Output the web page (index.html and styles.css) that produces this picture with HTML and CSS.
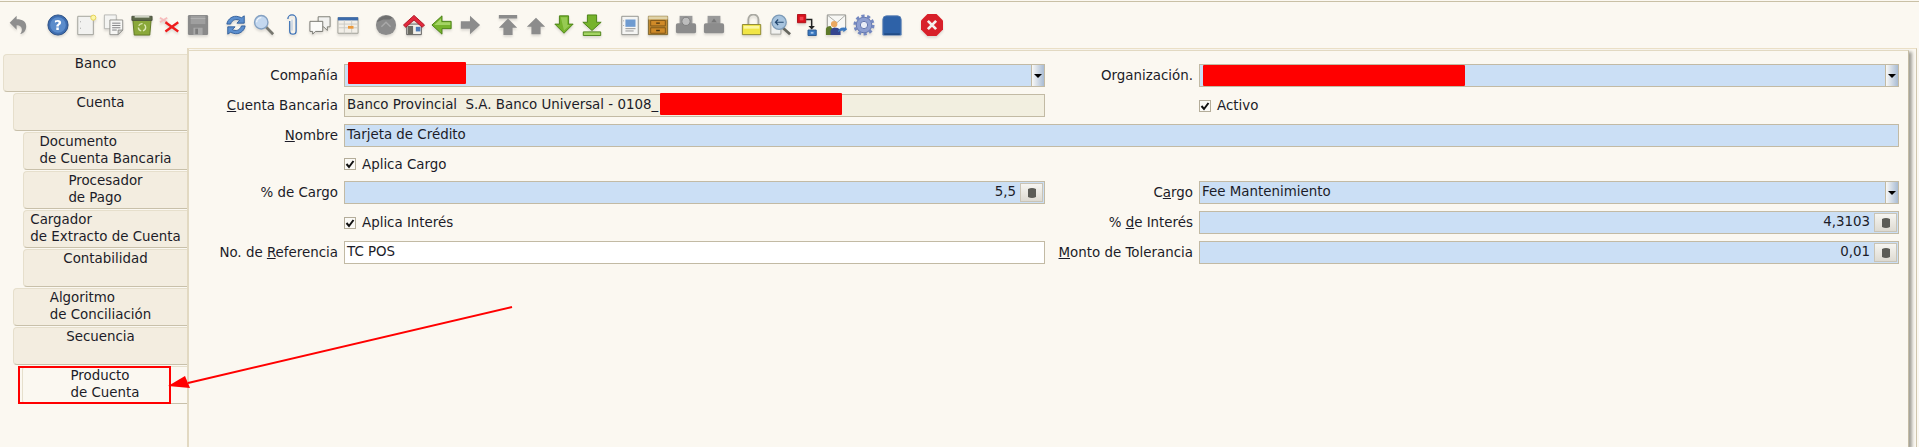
FILE: index.html
```html
<!DOCTYPE html>
<html lang="es">
<head>
  <meta charset="UTF-8" />
  <title>Banco</title>
  <link rel="stylesheet" href="styles.css">
</head>
<body>
  <!-- Barra de herramientas -->
  <div class="toolbar">
    <div class="tool-group wide">
      <span class="tool"><svg viewBox="0 0 24 24"><path d="M10 2 2 10l8 8v-5c4 0 6 2 6 5 0 2-1 4-2 5 5-1 7-5 7-9 0-5-4-8-11-8z" transform="translate(1 0) scale(.95)" fill="#8e8e8e"/></svg></span>
    </div>
    <div class="tool-group">
      <span class="tool"><svg viewBox="0 0 24 24"><circle cx="12" cy="12" r="11" fill="#3e6db0" stroke="#24497f"/><circle cx="12" cy="12" r="8.500" fill="#5b8ccb"/><text x="12" y="17.500" class="glyph">?</text></svg></span>
      <span class="tool"><svg viewBox="0 0 24 24"><path d="M3 2.500h17v20H3z" fill="#f2f2f0" stroke="#9c9c96"/><circle cx="20" cy="4" r="2.800" fill="#fbf6a8" stroke="#e3cf52"/><path d="M6 8v1M6 15v1" stroke="#999"/></svg></span>
      <span class="tool"><svg viewBox="0 0 24 24"><path d="M1.500 1h13v15h-13z" fill="#f4f4f2" stroke="#b4b4b0"/><path d="M7.500 6.500h14v11l-5 5h-9z" fill="#f6f6f4" stroke="#8e8e8a"/><path d="M10 10h9M10 12.500h9M10 15h9M10 17.500h5" stroke="#77777a"/><path d="m16.500 22.500 5-5h-5z" fill="#cfcfca" stroke="#8e8e8a"/></svg></span>
      <span class="tool"><svg viewBox="0 0 24 24"><path d="M2 6h20l-1.500 17h-17z" fill="#8aa83a" stroke="#5c7420"/><path d="M1 2.500h22V7H1z" fill="#5d6a4a" stroke="#494f3c"/><path d="M4 2h16v2H4z" fill="#cfd4c5"/><circle cx="12" cy="14.500" r="4" fill="none" stroke="#dde8b6" stroke-width="1.500" stroke-dasharray="5 2"/></svg></span>
      <span class="tool"><svg viewBox="0 0 24 24"><path d="m1 4 8 5M9 4 1 9" stroke="#f6bcbc" stroke-width="2"/><path d="m7 9 14 10M21 9 7 19" stroke="#ee1c1c" stroke-width="2.600"/></svg></span>
      <span class="tool"><svg viewBox="0 0 24 24"><path d="M1 2.500q0-1.500 1.500-1.500h19Q23 1 23 2.500v19q0 1.500-1.500 1.500h-19Q1 23 1 21.500z" fill="#8a8a8a"/><path d="M4 2h16v9H4z" fill="#9f9f9f"/><path d="M4 5h16" stroke="#b5b5b5"/><path d="M7 15h10v8H7z" fill="#a8a8a8"/><path d="M9 16h3v6H9z" fill="#7c7c7c"/></svg></span>
    </div>
    <div class="tool-group">
      <span class="tool"><svg viewBox="0 0 24 24"><path d="M2 11C3 5 9 1 15 3l3 1 3-2v8h-8l3-3c-4-2-8-1-10 4z" fill="#5c8fce" stroke="#2f5c98"/><path d="M22 13c-1 6-7 10-13 8l-3-1-3 2v-8h8l-3 3c4 2 8 1 10-4z" fill="#5c8fce" stroke="#2f5c98"/></svg></span>
      <span class="tool"><svg viewBox="0 0 24 24"><path d="m14 14 8 8" stroke="#77776f" stroke-width="3"/><circle cx="9" cy="9" r="7.300" fill="#c4d8ef" stroke="#84a1c2" stroke-width="1.500"/><path d="M4 9a5 5 0 0 1 5-5" stroke="#fff" fill="none"/></svg></span>
      <span class="tool"><svg viewBox="0 0 24 24"><path d="M9 7v11a3.500 3.500 0 0 0 7 0V5a4.500 4.500 0 0 0-9 0v0" transform="translate(.5 .5)" fill="none" stroke="#3b70b5" stroke-width="1.400"/><path d="M12 6v12" stroke="#a9c1de"/></svg></span>
      <span class="tool"><svg viewBox="0 0 24 24"><path d="M10 3h13v11h-3v4l-4-4h-6z" fill="#f2f2f0" stroke="#77776f"/><path d="M1 8h14v11H7l-3 3v-3H1z" fill="#fbfbf9" stroke="#6e6e68"/></svg></span>
      <span class="tool"><svg viewBox="0 0 24 24"><path d="M1 4h22v17H1z" fill="#f2efe8" stroke="#9c9c94"/><path d="M1 3.500h22V7H1z" fill="#3c6bab"/><path d="M1 11h22M1 15h22M8 7v14M16 7v14" stroke="#c9c9c4"/><path d="M12 13h6v3h-6z" fill="#ec9a3c"/></svg></span>
    </div>
    <div class="tool-group">
      <span class="tool"><svg viewBox="0 0 24 24"><circle cx="12" cy="12" r="11" fill="#8b8b8b"/><path d="M2 9c3-7 12-9 17-5l-3 2H9z" fill="#6f6f6f"/><path d="m7 14 5-5 5 5" fill="none" stroke="#a9a9a9" stroke-width="1.500"/></svg></span>
      <span class="tool"><svg viewBox="0 0 24 24"><path d="M4 11h16v11.500H4z" fill="#f2f0ea" stroke="#555"/><path d="M5 13h6v9.500H5z" fill="#6b6b63"/><path d="M14 14h5v5h-5z" fill="#4b7ab8"/><path d="M.5 12 12 1.500 23.500 12 21 14.500 12 6.500 3 14.500z" fill="#e2283c" stroke="#a8101f"/></svg></span>
      <span class="tool"><svg viewBox="0 0 24 24"><path d="M1 12 12 2v6h10v8H12v6z" fill="#76b32c" stroke="#467e12"/><path d="M3.500 12 11 5v4h10v3H3.500z" fill="#a4d464"/></svg></span>
      <span class="tool"><svg viewBox="0 0 24 24"><path d="M23 12 12 2v6H2v8h10v6z" fill="#8c8c8c"/></svg></span>
    </div>
    <div class="tool-group">
      <span class="tool"><svg viewBox="0 0 24 24"><path d="M2 1h20v4H2zM12 5l10 10h-5v8H7v-8H2z" fill="#8c8c8c"/></svg></span>
      <span class="tool"><svg viewBox="0 0 24 24"><path d="M12 4l10 10h-5v8H7v-8H2z" fill="#8c8c8c"/></svg></span>
      <span class="tool"><svg viewBox="0 0 24 24"><path d="M7 2h10v9h5L12 21 2 11h5z" fill="#76b32c" stroke="#467e12"/><path d="M8.500 3.500h7v8.500h3L12 18z" fill="#a4d464" opacity=".7"/></svg></span>
      <span class="tool"><svg viewBox="0 0 24 24"><path d="M7 1h10v8h5L12 18 2 9h5z" fill="#76b32c" stroke="#467e12"/><path d="M2.500 19.500h19v4h-19z" fill="#a4d464" stroke="#467e12"/></svg></span>
    </div>
    <div class="tool-group">
      <span class="tool"><svg viewBox="0 0 24 24"><path d="M3 2.500h18v20H3z" fill="#f5f5f3" stroke="#8c8c88"/><path d="M7 6h11v8H7z" fill="#6f9bd0"/><path d="M7 16h11M7 18.500h9" stroke="#8e8e8e"/><path d="M5 7v1M5 12v1" stroke="#999"/></svg></span>
      <span class="tool"><svg viewBox="0 0 24 24"><path d="M1.500 2.500h21v20h-21z" fill="#c08a30" stroke="#75602c"/><path d="M1.500 2.500h21V6h-21z" fill="#e0d3a8"/><path d="M4 7h16v6H4zM4 15h16v6H4z" fill="#d08a28" stroke="#7d5518"/><path d="M10 10h4M10 18h4" stroke="#4a3510" stroke-width="1.400"/></svg></span>
      <span class="tool"><svg viewBox="0 0 24 24"><path d="M5 2h14v11H5z" fill="#9a9a9a"/><path d="M1 12q0-2 2-2h18q2 0 2 2v7q0 2-2 2H3q-2 0-2-2z" fill="#8c8c8c"/><circle cx="12" cy="8" r="4.500" fill="#bdbdbd" stroke="#7c7c7c"/></svg></span>
      <span class="tool"><svg viewBox="0 0 24 24"><path d="M5 2h14v11H5z" fill="#9a9a9a"/><path d="M1 12q0-2 2-2h18q2 0 2 2v7q0 2-2 2H3q-2 0-2-2z" fill="#8c8c8c"/><path d="M9 9l3-4 3 4z" fill="#777"/></svg></span>
    </div>
    <div class="tool-group wide">
      <span class="tool"><svg viewBox="0 0 24 24"><path d="M9 11V6a5.500 5.500 0 0 1 11 0v5" transform="translate(-1 0)" fill="none" stroke="#aaa9a2" stroke-width="2"/><path d="M1.500 11.500h20v11h-20z" fill="#f1e545" stroke="#86802c"/><path d="M3 13h17v3H3z" fill="#fbf6a0"/></svg></span>
      <span class="tool"><svg viewBox="0 0 24 24"><path d="M2 9h11v13H2z" fill="#f1f1ef" stroke="#9c9c96"/><path d="m15 15 8 7" stroke="#66665e" stroke-width="3"/><circle cx="11" cy="9" r="7.800" fill="#a8c4de" stroke="#7d9bb8" stroke-width="1.400"/><path d="M16 9H7m3-3-3 3 3 3" fill="none" stroke="#22466e" stroke-width="1.300"/></svg></span>
      <span class="tool"><svg viewBox="0 0 24 24"><path d="M.5.500h9v9h-9z" fill="#d8101c" stroke="#a80a14"/><path d="M3 3h4v4H3z" fill="#f04450"/><path d="M10 6h6v8" fill="none" stroke="#222" stroke-width="1.600"/><path d="m12.500 13 3.500 4 3.500-4z" fill="#222"/><path d="M12 17.500h9v6h-9z" fill="#3a78c0" stroke="#28558e"/><path d="M15 19.500h3v2h-3z" fill="#a6c8ee"/></svg></span>
      <span class="tool"><svg viewBox="0 0 24 24"><path d="M2.500 1h20v16h-20z" fill="#f7f7f4" stroke="#8c8c88"/><path d="m3 1.500 10 8 9-8" fill="none" stroke="#a4a4a0"/><circle cx="10" cy="11" r="3.500" fill="#eba860"/><path d="M1 23v-7q1-3 5-3l2 3v7z" fill="#5f7a2a"/><path d="M6 23v-5q2-4 6-3 4 0 5 4v4z" fill="#35458f"/><path d="M14 20q1-6 8-5v-2l2 4-4 3v-2q-4 0-6 2z" fill="#3a78c0"/></svg></span>
      <span class="tool"><svg viewBox="0 0 24 24"><circle cx="12" cy="12" r="8.500" fill="#8e9fd0" stroke="#5c70aa"/><circle cx="12" cy="12" r="10" fill="none" stroke="#7488c0" stroke-width="3" stroke-dasharray="3.500 2.780"/><circle cx="12" cy="12" r="4" fill="#e8ecf6" stroke="#5c70aa"/></svg></span>
      <span class="tool"><svg viewBox="0 0 24 24"><path d="M2 6q0-4 4-4h12q4 0 4 4v17H2z" fill="#2e62a8" stroke="#5b80b4"/><path d="M3.500 21h17v2h-17z" fill="#224c86"/></svg></span>
    </div>
    <div class="tool-group">
      <span class="tool"><svg viewBox="0 0 24 24"><path d="M7 0h10l7 7v10l-7 7H7l-7-7V7z" fill="#d8202a"/><path d="m7.500 7.500 9 9m0-9-9 9" stroke="#f4f0ee" stroke-width="3"/></svg></span>
    </div>
  </div>

  <div class="workspace">
    <!-- Pestañas -->
    <div class="tabs">
      <div class="tab depth-0"><span>Banco</span></div>
      <div class="tab depth-1"><span>Cuenta</span></div>
      <div class="tab depth-2"><span>Documento<br>de Cuenta Bancaria</span></div>
      <div class="tab depth-2"><span>Procesador<br>de Pago</span></div>
      <div class="tab depth-2"><span>Cargador<br>de Extracto de Cuenta</span></div>
      <div class="tab depth-2"><span>Contabilidad</span></div>
      <div class="tab depth-1"><span>Algoritmo<br>de Conciliación</span></div>
      <div class="tab depth-1"><span>Secuencia</span></div>
      <div class="tab depth-1b selected"><span>Producto<br>de Cuenta</span></div>
    </div>

    <div class="panel-frame">
      <div class="panel">
        <form class="form-grid">
          <label class="lbl">Compañía</label>
          <div class="field combo"><span class="value"></span><i class="redact redact-company"></i><span class="drop"><b></b></span></div>
          <label class="lbl">Organización.</label>
          <div class="field combo"><span class="value"></span><i class="redact redact-org"></i><span class="drop"><b></b></span></div>

          <label class="lbl"><u>C</u>uenta Bancaria</label>
          <div class="field readonly"><span class="value">Banco Provincial&nbsp; S.A. Banco Universal - 0108_</span><i class="redact redact-account"></i></div>
          <span></span>
          <div class="check"><span class="box"><svg viewBox="0 0 10 10"><path d="M1.500 5 4 8l4.500-6" fill="none" stroke="#111" stroke-width="2"/></svg></span>Activo</div>

          <label class="lbl"><u>N</u>ombre</label>
          <div class="field span-3"><span class="value">Tarjeta de Crédito</span></div>

          <span></span>
          <div class="check"><span class="box"><svg viewBox="0 0 10 10"><path d="M1.500 5 4 8l4.500-6" fill="none" stroke="#111" stroke-width="2"/></svg></span>Aplica Cargo</div>
          <span></span><span></span>

          <label class="lbl">% de Cargo</label>
          <div class="field number"><span class="value">5,5</span><span class="calc"><svg viewBox="0 0 10 12"><path d="M1 2q4-2 8 0v8q-4 2-8 0z" fill="#5c5c56"/></svg></span></div>
          <label class="lbl">C<u>a</u>rgo</label>
          <div class="field combo"><span class="value">Fee Mantenimiento</span><span class="drop"><b></b></span></div>

          <span></span>
          <div class="check"><span class="box"><svg viewBox="0 0 10 10"><path d="M1.500 5 4 8l4.500-6" fill="none" stroke="#111" stroke-width="2"/></svg></span>Aplica Interés</div>
          <label class="lbl">% <u>d</u>e Interés</label>
          <div class="field number"><span class="value">4,3103</span><span class="calc"><svg viewBox="0 0 10 12"><path d="M1 2q4-2 8 0v8q-4 2-8 0z" fill="#5c5c56"/></svg></span></div>

          <label class="lbl">No. de <u>R</u>eferencia</label>
          <div class="field plain"><span class="value">TC POS</span></div>
          <label class="lbl"><u>M</u>onto de Tolerancia</label>
          <div class="field number"><span class="value">0,01</span><span class="calc"><svg viewBox="0 0 10 12"><path d="M1 2q4-2 8 0v8q-4 2-8 0z" fill="#5c5c56"/></svg></span></div>
        </form>
      </div>
    </div>

    <!-- Anotación sobre la captura -->
    <div class="mark-box"></div>
    <svg class="mark-arrow" viewBox="0 0 360 100"><path d="M344 3 20 79" stroke="#f00" stroke-width="2" fill="none"/><path d="M0 82 17 72l5 12z" fill="#f00"/></svg>
  </div>
</body>
</html>
```

FILE: styles.css
```css
* { box-sizing: border-box; }
body {
  margin: 0;
  height: 447px;
  overflow: hidden;
  background: #fbf8f1;
  color: #1c1c28;
  font-family: "DejaVu Sans", sans-serif;
  font-size: 13.4px;
}

.toolbar {
  display: flex;
  height: 47px;
  margin-top: 1px;
  padding: 12px 0 0 4px;
  border-top: 1px solid #c9c0a6;
}
.tool-group { display: flex; margin-right: 10px; }
.tool-group.wide { margin-right: 12px; }
.tool {
  display: flex;
  justify-content: center;
  width: 28px;
  height: 22px;
}
.tool svg {
  width: 22px;
  height: 22px;
  display: block;
  filter: drop-shadow(0 2px 1px rgba(0, 0, 0, .12));
}
.glyph {
  font-family: "DejaVu Sans", sans-serif;
  font-size: 15px;
  font-weight: bold;
  fill: #fff;
  text-anchor: middle;
}

.workspace {
  position: relative;
  display: flex;
  height: 399px;
}

.tabs {
  width: 187px;
  flex: none;
  padding-top: 6px;
}
.tab {
  height: 38px;
  margin-bottom: 1px;
  background: #f3ede0;
  border: 1px solid #e6dfcc;
  border-right: none;
  border-bottom: 1px solid #c8c0aa;
  border-radius: 4px 0 0 4px;
  text-align: center;
  line-height: 17px;
}
.tab span { display: inline-block; text-align: left; }
.depth-0 { margin-left: 3px; }
.depth-1 { margin-left: 13px; }
.depth-2 { margin-left: 23px; }
.depth-1b { margin-left: 22px; }
.tab.selected { background: #fbf8f1; }

.panel-frame {
  flex: 1;
  margin-right: 2px;
  border-top: 1px solid #eadfc6;
  border-left: 2px solid #e2d9c2;
  border-right: 1px solid #cfc6ae;
  padding: 1px 7px 0 0;
  overflow: hidden;
}
.panel {
  height: 100%;
  padding-top: 13px;
  border-top: 1px solid #e2d9c2;
  border-right: 1px solid #c4bca6;
  box-shadow: 3px 2px 3px rgba(90, 90, 80, .55);
}

.form-grid {
  display: grid;
  grid-template-columns: 155px 701px 154px 700px;
  grid-template-rows: 23px 23px 23px 20px 23px 23px 23px;
  row-gap: 7px;
}
.lbl {
  padding-right: 6px;
  text-align: right;
  line-height: 23px;
  white-space: nowrap;
}
.field {
  position: relative;
  display: flex;
  background: #cbdff5;
  border: 1px solid #c2baa4;
  line-height: 19px;
}
.value { flex: 1; padding-left: 2px; white-space: pre; }
.span-3 { grid-column: span 3; }
.readonly { background: #f2efe0; }
.plain { background: #fff; }
.number .value { text-align: right; padding-right: 3px; }

.drop {
  position: relative;
  width: 13px;
  flex: none;
  background: linear-gradient(to right, #f8f8f6, #a9bcd4);
  border-left: 1px solid #c2baa4;
}
.drop b {
  position: absolute;
  top: 9px;
  left: 2px;
  border: 4px solid transparent;
  border-top-color: #000;
  border-bottom: none;
}
.calc {
  display: flex;
  align-items: center;
  justify-content: center;
  width: 23px;
  flex: none;
  background: linear-gradient(#f6f5f1, #dedbd2);
  border: 1px solid #c9c4b6;
  margin: 1px;
}
.calc svg { width: 10px; height: 12px; }

.check {
  display: flex;
  align-items: center;
  gap: 6px;
  height: 100%;
}
.box {
  display: flex;
  width: 12px;
  height: 12px;
  background: #fbfaf6;
  border: 1px solid #b4ad9a;
}
.box svg { width: 10px; height: 10px; }

.redact {
  position: absolute;
  height: 22px;
  background: #f00;
  border-radius: 1px;
}
.redact-company { left: 3px; top: -3px; width: 118px; }
.redact-org { left: 3px; top: 0; width: 262px; height: 21px; }
.redact-account { left: 315px; top: -2px; width: 182px; }

.mark-box {
  position: absolute;
  left: 18px;
  top: 318px;
  width: 153px;
  height: 38px;
  border: 2px solid #f00;
}
.mark-arrow {
  position: absolute;
  left: 168px;
  top: 256px;
  width: 360px;
  height: 100px;
}
```
